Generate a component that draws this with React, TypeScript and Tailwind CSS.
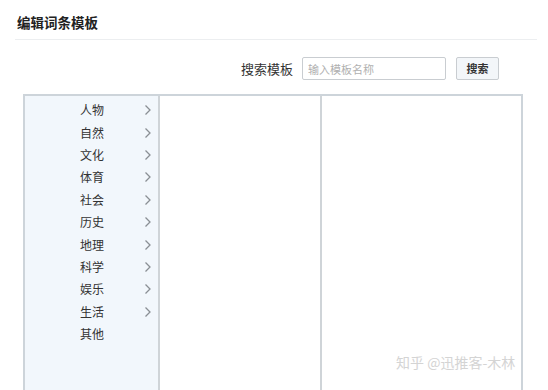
const categories = [
  { name: "人物", more: true },
  { name: "自然", more: true },
  { name: "文化", more: true },
  { name: "体育", more: true },
  { name: "社会", more: true },
  { name: "历史", more: true },
  { name: "地理", more: true },
  { name: "科学", more: true },
  { name: "娱乐", more: true },
  { name: "生活", more: true },
  { name: "其他", more: false },
];

function Chevron() {
  return (
    <svg width="8" height="12" viewBox="0 0 8 12" className="block">
      <polyline points="1.5,1.5 6,6 1.5,10.5" fill="none" stroke="#8a8f94" strokeWidth="1.3" />
    </svg>
  );
}

export default function App() {
  return (
    <div
      className="relative h-[390px] w-[548px] overflow-hidden bg-white text-[#333]"
      style={{ fontFamily: '"Noto Sans CJK SC", "Noto Sans", sans-serif' }}
    >
      <div className="ml-[15px] mr-[11px] border-b border-[#eceef0] pt-[14px] pb-[8px] pl-[2px]">
        <h1 className="text-[13.5px] font-bold leading-[17px] text-[#222]">编辑词条模板</h1>
      </div>

      <div className="mt-[17px] flex items-center justify-end pr-[49px]">
        <span className="mr-[9px] text-[13px] text-[#333]">搜索模板</span>
        <input
          className="h-[23px] w-[144px] rounded-[2px] border border-[#c9cdd1] px-[5px] text-[11px] text-[#999] outline-none placeholder:text-[#b0b0b0]"
          placeholder="输入模板名称"
        />
        <button className="ml-[10px] h-[23px] w-[43px] rounded-[2px] border border-[#c9cdd1] bg-[#f3f6f9] text-[11px] font-bold text-[#333]">
          搜索
        </button>
      </div>

      <div className="ml-[23px] mt-[14px] flex h-[310px] w-[500px] border-2 border-[#cdd4da]">
        <div className="w-[133px] shrink-0 bg-[#f2f7fc] pt-[3px]">
          {categories.map((c) => (
            <div key={c.name} className="flex h-[22.4px] items-center">
              <span className="w-[79px] text-right text-[12px] leading-none text-[#333]">{c.name}</span>
              {c.more && (
                <span className="ml-[40px]">
                  <Chevron />
                </span>
              )}
            </div>
          ))}
        </div>
        <div className="w-[162px] shrink-0 border-l-2 border-[#cfd4d8] bg-white" />
        <div className="flex-1 border-l-2 border-[#cfd4d8] bg-white" />
      </div>

      <div className="absolute left-[396px] top-[352px] text-[14px] text-[#d4d4d4]">知乎 @迅推客-木林</div>
    </div>
  );
}
